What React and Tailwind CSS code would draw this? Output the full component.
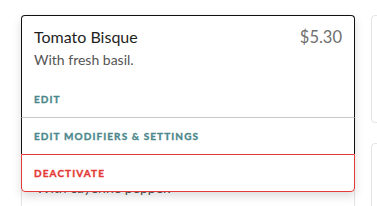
import React from "react";

function Card() {
  return <div className="h-[108px] rounded-[4px] border border-[#e4e4e4] bg-white" />;
}

export default function App() {
  return (
    <div
      className="h-[206px] w-[377px] overflow-hidden bg-white pl-[21px] pt-[15px]"
      style={{ fontFamily: "Lato, 'Noto Sans', sans-serif" }}
    >
      <div className="grid grid-cols-[334px_334px] gap-x-[16px] gap-y-[20px]">
        <div className="relative">
          <Card />
          <div className="absolute left-0 top-0 z-10 w-[334px] rounded-[4px] bg-white shadow-[0_4px_10px_rgba(0,0,0,0.14)]">
            <div className="rounded-t-[4px] border border-b-0 border-[#111] px-[12px] pt-[11px]">
              <div className="flex items-start justify-between">
                <div className="text-[16px] leading-[20px] text-[#1f1f1f]">Tomato Bisque</div>
                <div className="text-[16.5px] leading-[20px] text-[#6f6f6f]">$5.30</div>
              </div>
              <div className="mt-[3px] text-[14px] leading-[20px] text-[#555]">With fresh basil.</div>
              <div className="pb-[11px] pt-[22px] text-[10px] font-bold leading-[14px] tracking-[1.1px] text-[#4b878b] [-webkit-text-stroke:0.35px_#4b878b]">
                EDIT
              </div>
            </div>
            <div className="border-x border-t border-x-[#111] border-t-[#c9c9c9] px-[12px] py-[11px] text-[10px] font-bold leading-[14px] tracking-[1.1px] text-[#4b878b] [-webkit-text-stroke:0.35px_#4b878b]">
              EDIT MODIFIERS &amp; SETTINGS
            </div>
            <div className="rounded-b-[4px] border border-[#e53a3a] px-[12px] py-[11px] text-[10px] font-bold leading-[14px] tracking-[1.1px] text-[#e53935] [-webkit-text-stroke:0.35px_#e53935]">
              DEACTIVATE
            </div>
          </div>
        </div>
        <Card />
        <div className="h-[108px] rounded-[4px] border border-[#e4e4e4] bg-white px-[12px] pt-[11px]">
          <div className="h-[20px]" />
          <div className="mt-[3px] pl-[2px] text-[14px] leading-[20px] text-[#555]">With cayenne pepper.</div>
        </div>
        <Card />
      </div>
    </div>
  );
}
